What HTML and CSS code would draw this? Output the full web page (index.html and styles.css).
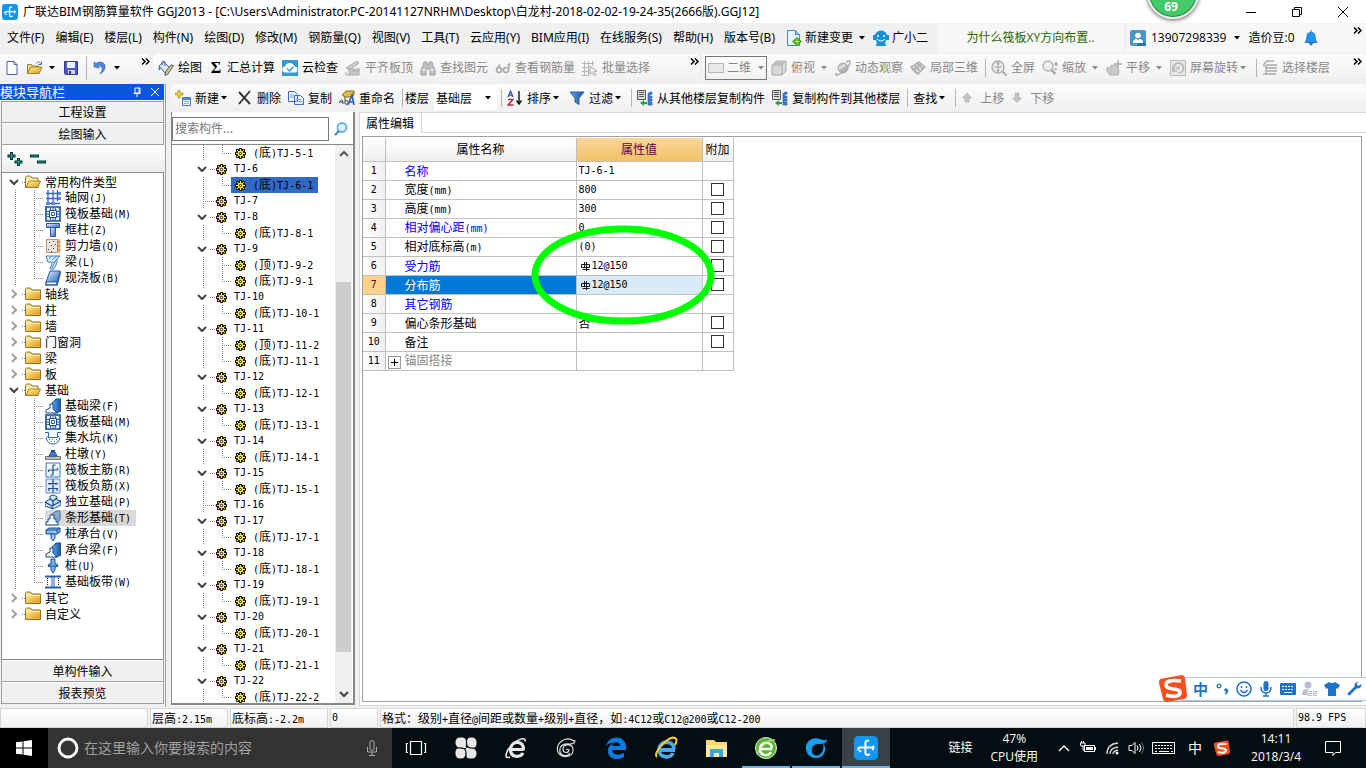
FILE: index.html
```html
<!DOCTYPE html>
<html lang="zh-CN">
<head>
<meta charset="utf-8">
<title>广联达BIM钢筋算量软件 GGJ2013</title>
<link rel="stylesheet" href="styles.css">
</head>
<body>
<svg class="defs" aria-hidden="true">
<defs>
<linearGradient id="gold" x1="0" y1="0" x2="1" y2="1"><stop offset="0" stop-color="#fff3a8"/><stop offset="1" stop-color="#e09a10"/></linearGradient>
<linearGradient id="blue" x1="0" y1="0" x2="1" y2="1"><stop offset="0" stop-color="#e4f0ff"/><stop offset="1" stop-color="#2f66c4"/></linearGradient>
<linearGradient id="steel" x1="0" y1="0" x2="1" y2="0"><stop offset="0" stop-color="#5aa7ea"/><stop offset="1" stop-color="#1c4f9c"/></linearGradient>
<symbol id="logo" viewBox="0 0 16 16"><rect width="16" height="16" rx="3" fill="#1296ee"/><path d="M10 3.400c-1.600-1-2.400 0-2.400 1.200v6.800c0 1.400 2.200 1.800 2.800.4M3 9.600c-.6-1.200 0-2 1.200-2h8.400M12.600 6.400c.8.8.6 2.400-.6 2.600M3.400 10.400l1.400-.6" fill="none" stroke="#fff" stroke-width="1.300"/></symbol>
<symbol id="arrow" viewBox="0 0 6 4"><path d="M0 0h6L3 3.500z" fill="currentColor"/></symbol>
<symbol id="more" viewBox="0 0 9 7"><path d="M1 .5l3 3-3 3M5 .5l3 3-3 3" fill="none" stroke="#000" stroke-width="1.500"/></symbol>
<symbol id="doc" viewBox="0 0 16 16"><path d="M3 1.500h7l3 3v10H3z" fill="#fdfeff" stroke="#49669a"/><path d="M10 1.500v3h3" fill="#bcd0ec" stroke="#49669a"/></symbol>
<symbol id="open" viewBox="0 0 16 16"><path d="M.5 13.500v-9h4l1 1.500h6v2" fill="url(#gold)" stroke="#9b7b31"/><path d="M.5 13.500l3-6.500h11.500l-3 6.500z" fill="url(#gold)" stroke="#a5812c"/><path d="M9 3.500c2-2.500 4-1.500 4.500.5M14.500 1.500v3h-3" fill="none" stroke="#4f6e9b"/></symbol>
<symbol id="save" viewBox="0 0 16 16"><path d="M1.500 1.500h13v13h-12l-1-1z" fill="#4e55bd" stroke="#343a91"/><path d="M4 2h8v6H4z" fill="#e8efff"/><path d="M5 10h7v4H5z" fill="#cdd5e8"/><path d="M6 11h2v3H6z" fill="#30367f"/></symbol>
<symbol id="undo" viewBox="0 0 16 16"><path d="M2 7V2l2 1.500C9 0 14 3 13 8c-.5 3-3 5-5 6 2-3 3-5 1.500-7C8.500 5.500 7 5.500 6 6l1.500 2z" fill="#4d86dc" stroke="#2d62b8" stroke-width=".6"/></symbol>
<symbol id="draw" viewBox="0 0 16 16"><path d="M1 6l5-4 6 6-5 5z" fill="#dce8f8" stroke="#41659b"/><path d="M4 5V2q1-2 3 0v4" fill="none" stroke="#41659b"/><path d="M1 6q-1 3 0 5 2-2 1-4z" fill="#3d79d0"/><path d="M15.500 5.500L10 14l-3 1.500.5-3.500L13 5z" fill="#e9c352" stroke="#3862a3"/></symbol>
<symbol id="cloud" viewBox="0 0 16 16"><path d="M0 0h16v16H0z" fill="#3598d7"/><path d="M3.500 12.500a3 3 0 0 1-.5-6 5 5 0 0 1 9.500 0 3 3 0 0 1 0 6z" fill="#fff"/><path d="M5 8.500l2.500 2.500 4-4" fill="none" stroke="#3598d7" stroke-width="1.500"/></symbol>
<symbol id="align" viewBox="0 0 16 16"><path d="M1 8l11-7 2 2-8 6z" fill="#ccc" stroke="#aaa"/><path d="M4 9h4v2h6V8M4 9v6h10v-4" fill="#c6c6c6" stroke="#aaa"/><path d="M1 12v3h3" fill="none" stroke="#aaa"/></symbol>
<symbol id="bino" viewBox="0 0 16 16"><path d="M4 2h3v3h2V2h3l1 4 2 4v5h-5V9H6v6H1v-5l2-4z" fill="#c1c1c1" stroke="#9d9d9d"/><path d="M2 10h4M10 10h4" stroke="#fff"/></symbol>
<symbol id="glasses" viewBox="0 0 16 16"><circle cx="4" cy="10" r="2.500" fill="none" stroke="#aaa" stroke-width="1.600"/><circle cx="11" cy="10" r="2.500" fill="none" stroke="#aaa" stroke-width="1.600"/><path d="M6.500 9.500h2M2 9l3-4.500M13.500 10l1-6-2 1" fill="none" stroke="#aaa" stroke-width="1.400"/></symbol>
<symbol id="batch" viewBox="0 0 16 16"><path d="M0 3.500h12M0 7.500h7M0 11.500h7M0 15.500h7M2.500 1v14M6.500 1v14M10.500 1v5" stroke="#b4b4b4" fill="none"/><path d="M8 6l7 5-3 .5 2 3-2 1-2-3-2 2z" fill="#eee" stroke="#aaa"/></symbol>
<symbol id="cube" viewBox="0 0 16 16"><path d="M1 5l4-4h10v10l-4 4H1z" fill="#d8d8d8" stroke="#aaa"/><path d="M1 5h10v10M11 5l4-4" fill="none" stroke="#aaa"/><path d="M2 5l3-3h8l-3 3z" fill="#bebebe"/></symbol>
<symbol id="orbit" viewBox="0 0 16 16"><circle cx="8" cy="8" r="5" fill="#bbb" stroke="#aaa"/><path d="M2 13Q0 15 1.500 15C5 15 15 7 15 2q0-2-4 0" fill="none" stroke="#aaa" stroke-width="1.500"/><path d="M4 8l6-3" stroke="#e7e7e7" stroke-width="2"/></symbol>
<symbol id="local" viewBox="0 0 16 16"><path d="M1 7l8-5 6 5-7 7z" fill="#ddd" stroke="#aaa" stroke-width="1.300"/><path d="M4 5l6 6M7 3l6 6M4 10l7-6M1 7l4 5 3 2" fill="none" stroke="#aaa" stroke-width="1.300"/></symbol>
<symbol id="full" viewBox="0 0 16 16"><circle cx="7" cy="7" r="6" fill="#eee" stroke="#aaa" stroke-width="1.400"/><path d="M7 3v8M3 7h8M5.500 4L7 2.500 8.500 4M5.500 10L7 11.500 8.500 10" fill="none" stroke="#aaa" stroke-width="1.200"/><path d="M11.500 11.500l4 4" stroke="#aaa" stroke-width="2"/></symbol>
<symbol id="zoomi" viewBox="0 0 16 16"><circle cx="6" cy="6" r="5" fill="#eee" stroke="#b4b4b4" stroke-width="1.400"/><path d="M9.500 10l4 4" stroke="#aaa" stroke-width="2.500"/><path d="M12 4h4M14 2v4M12 9h3" stroke="#aaa" stroke-width="1.500"/></symbol>
<symbol id="pan" viewBox="0 0 16 16"><path d="M4 15c-4-4-4-7-2-8l2 2 1-4 6 1 2 4-1 5z" fill="#c9c9c9" stroke="#b0b0b0"/><path d="M12 0v8M8 4h8" stroke="#aaa" stroke-width="1.400"/></symbol>
<symbol id="rotate" viewBox="0 0 16 16"><path d="M.5.500h15v15H.500z" fill="#e6e6e6" stroke="#bbb"/><path d="M4 10a5 5 0 1 1 5 3M3 6v5h4" fill="none" stroke="#b4b4b4" stroke-width="1.600"/><circle cx="8" cy="8" r="2" fill="#ccc"/></symbol>
<symbol id="floor" viewBox="0 0 16 16"><path d="M2 4l3-3h7M2 4v3M4 5h11M4 8h11M4 11h11M1 14h13M4 5v9" fill="none" stroke="#aaa" stroke-width="1.400"/></symbol>
<symbol id="rect" viewBox="0 0 16 16"><path d="M.5 3.500h15v9H.500z" fill="#e8e8e8" stroke="#b5b5b5"/></symbol>
<symbol id="newitem" viewBox="0 0 16 16"><path d="M3 0h2v3h3v2H5v3H3V5H0V3h3z" fill="#f4d745" stroke="#a28420" stroke-width=".7"/><path d="M7.500 7.500h8v8h-8z" fill="#edf4ff" stroke="#4d79bd"/><path d="M8 8h7v2H8z" fill="#4d86dc"/><path d="M9 11.500h5M9 13.500h5" stroke="#8dabdb"/></symbol>
<symbol id="del" viewBox="0 0 16 16"><path d="M2 2l11 12M13 1L2 14" stroke="#333" stroke-width="1.900"/></symbol>
<symbol id="copy" viewBox="0 0 16 16"><path d="M.5 1.500h6l3 3v7h-9zM6.500 5.500h6l3 3v6h-9z" fill="#eef4ff" stroke="#3f6dbb"/><path d="M2 5h4M2 7h4M8 9.500h5M8 11.500h6" stroke="#7ba0dd"/></symbol>
<symbol id="rename" viewBox="0 0 16 16"><path d="M3 5l4-4h8v4l-4 2H6z" fill="#e2ba43" stroke="#886d22"/><path d="M0 13q3-6 4-1v2M1 12h3M6 7v7q4 1 3-3-1-1-3 0" fill="none" stroke="#444"/><path d="M9 15l4-10 2 10M10 12h5" fill="none" stroke="#285fb9" stroke-width="1.600"/></symbol>
<symbol id="sort" viewBox="0 0 16 16"><path d="M1 7l2.500-6L6 7M2 5h3" fill="none" stroke="#315eb0" stroke-width="1.400"/><path d="M1 9.500h5L1 15h5.500" fill="none" stroke="#a23047" stroke-width="1.400"/><path d="M12 1v12M9.500 10.500L12 14l2.500-3.500" fill="none" stroke="#111" stroke-width="1.400"/></symbol>
<symbol id="filter" viewBox="0 0 16 16"><path d="M1 2h14L10 8v6.500L6 12V8z" fill="url(#steel)" stroke="#2c5daf"/></symbol>
<symbol id="fcopy" viewBox="0 0 16 16"><path d="M.5.500h8v9h-8z" fill="#ddd" stroke="#555"/><path d="M2 2.500h5M2 4.500h5M2 6.500h5" stroke="#555"/><path d="M3 13l4-3v2h3v2H7v2z" fill="#22a340"/><path d="M11 4q0-2 4-2v2l-3 1v1h3v2h-3v1h3v2h-3v1h3v3h-4z" fill="#3f7ed0" stroke="#2462b6" stroke-width=".7"/></symbol>
<symbol id="up" viewBox="0 0 12 12"><path d="M6 1l4.500 5H8v4H4V6H1.500z" fill="#c4c4c4" stroke="#aaa" stroke-width=".6"/></symbol>
<symbol id="down" viewBox="0 0 12 12"><path d="M6 10.500L1.500 6H4V1h4v5h2.500z" fill="#c4c4c4" stroke="#aaa" stroke-width=".6"/></symbol>
<symbol id="newdoc" viewBox="0 0 16 16"><path d="M1.500.500h8l4 4v11h-12z" fill="#e9f6ff" stroke="#4b88ad"/><path d="M9.500.500v4h4" fill="#8fc6e4" stroke="#4b88ad"/><path d="M11 7l5 4.500-5 4.500-5-4.500z" fill="#43a716"/><path d="M11 9v5M8.500 11.500h5" stroke="#c8ef69"/></symbol>
<symbol id="robot" viewBox="0 0 16 16"><circle cx="8" cy="7" r="6.500" fill="#168fd9"/><path d="M0 5h3v5H0zM13 5h3v5h-3zM4 12h8l1 4H3z" fill="#168fd9"/><path d="M5 5v2M11 5v2" stroke="#fff" stroke-width="1.500"/><path d="M4 9q4 4 8 0" stroke="#fff" fill="none"/></symbol>
<symbol id="user" viewBox="0 0 16 16"><rect width="16" height="16" rx="2" fill="#4699c9"/><path d="M9 7l7 7v2H7z" fill="#28749f"/><circle cx="8" cy="5.500" r="2.800" fill="#fff"/><path d="M3 13v-2l3-2.500 2 1.500 2-1.500 3 2.500v2z" fill="#fff"/></symbol>
<symbol id="bell" viewBox="0 0 14 16"><path d="M7 0v2M1 12.500q2-2 2-7C3.500 1 10.500 1 11 5.500q0 5 2 7zM5 13h4l-2 2.500z" fill="#2292f3" stroke="#126dc1" stroke-width=".8"/></symbol>
<symbol id="folder" viewBox="0 0 16 14"><path d="M.5 12.500v-10l1-1.500h4l1.500 2h8.500v9.500z" fill="url(#gold)" stroke="#967126"/><path d="M1 4.500h14" stroke="#fff3b7"/></symbol>
<symbol id="fopen" viewBox="0 0 16 14"><path d="M.5 12.500v-10l1-1.500h4l1.500 2h6v9.500z" fill="#fff0a6" stroke="#967126"/><path d="M1 12.500L4 6h11.500l-3 6.500z" fill="url(#gold)" stroke="#a97c22"/></symbol>
<symbol id="cdown" viewBox="0 0 10 10"><path d="M1 3l4 4 4-4" fill="none" stroke="#444" stroke-width="2"/></symbol>
<symbol id="cright" viewBox="0 0 10 10"><path d="M3 1l4 4-4 4" fill="none" stroke="#a0a0a0" stroke-width="2"/></symbol>
<symbol id="cup" viewBox="0 0 10 10"><path d="M1 7l4-4 4 4" fill="none" stroke="#555" stroke-width="2"/></symbol>
<symbol id="gear" viewBox="0 0 11 11"><path d="M4 0h3v11H4zM0 4h11v3H0zM1 1h3v3H1zM7 1h3v3H7zM1 7h3v3H1zM7 7h3v3H7z" fill="#222"/><path d="M5 1h1v2H5zM5 8h1v2H5zM1 5h2v1H1zM8 5h2v1H8zM2 2h1v1H2zM8 2h1v1H8zM2 8h1v1H2zM8 8h1v1H8zM3 3h5v5H3z" fill="#fff200"/><path d="M3 3h1v1H3zM7 3h1v1H7zM3 7h1v1H3zM7 7h1v1H7z" fill="#fff200"/><path d="M4.500 4.500h2v2h-2z" fill="#fff" stroke="#333" stroke-width=".8"/></symbol>
<symbol id="grid" viewBox="0 0 16 16"><path d="M3 0v15M8 0v15M12.500 0v11M1 3.500h14M1 8.500h14M1 13.500h14" stroke="#3465c5" stroke-width="1.300"/><path d="M1 12h4v3H1zM6 12h4v3H6zM13 2h3v3h-3zM13 7h3v3h-3z" fill="#5f86d8"/></symbol>
<symbol id="raft" viewBox="0 0 16 16"><path d="M1 1h14v14H1z" fill="#e6f2ff" stroke="#174e93" stroke-width="1.600"/><path d="M4.500 4.500h7v7h-7z" fill="#fff" stroke="#174e93"/><path d="M6.500 6.500h3v3h-3zM2 5.500h2M2 8h2M2 10.500h2M12 5.500h2M12 8h2M12 10.500h2M5.500 2v2M8 2v2M10.500 2v2M5.500 12v2M8 12v2M10.500 12v2" fill="none" stroke="#174e93" stroke-width=".9"/></symbol>
<symbol id="column" viewBox="0 0 16 16"><path d="M1.500 1.500h13v4h-13z" fill="url(#blue)" stroke="#2857a5"/><path d="M5.500 5.500h5v9h-5z" fill="url(#blue)" stroke="#2857a5"/></symbol>
<symbol id="wall" viewBox="0 0 16 16"><path d="M1.500 1.500h11v13h-11z" fill="#e8e5df" stroke="#bf9168"/><path d="M4 4h1v1H4zM8 3h1v1H8zM6 7h1v1H6zM10 6h1v1h-1zM3 11h1v1H3zM8 10h1v1H8zM6 13h1v1H6z" fill="#333"/><path d="M14 1v14M12 4h4M12 8h4M12 12h4" stroke="#d86b16"/></symbol>
<symbol id="beam" viewBox="0 0 16 16"><path d="M1 2h14l-3 3v4l-3 6H5l2-5V8H3z" fill="#d9edff" stroke="#397fc0"/><path d="M4 5l3-3M7 6l5-4M8 9l5-5M7 14l4-8" stroke="#3b92d1"/></symbol>
<symbol id="slab" viewBox="0 0 16 16"><path d="M5 1h10l-3 11H1z" fill="url(#blue)" stroke="#295aae"/><path d="M1 12v3h11l3-11V1M12 12v3" fill="none" stroke="#295aae" stroke-width="1.500"/></symbol>
<symbol id="fbeam" viewBox="0 0 16 16"><path d="M7 5l4-4h5v12l-4 2H8z" fill="url(#steel)" stroke="#174e93"/><path d="M5 6h3v5l4 4H1v-3l4-2z" fill="#eef6ff" stroke="#174e93"/></symbol>
<symbol id="pit" viewBox="0 0 16 16"><path d="M0 2.500h3.500v5h9v-5H16M1 7q1 7 7 7t7-7" fill="none" stroke="#2364b4"/><path d="M2 6h1v1H2zM4 9h1v1H4zM7 9h1v1H7zM6 11h1v1H6zM9 11h1v1H9zM11 9h1v1h-1zM13 6h1v1h-1z" fill="#2a73cf"/></symbol>
<symbol id="pier" viewBox="0 0 16 16"><path d="M.5 10.500h15v3H.500z" fill="#bbb" stroke="#777"/><path d="M4 10l2-4h4l2 4z" fill="#438cd0" stroke="#205396"/><path d="M6 4h4v2H6z" fill="#174e93"/></symbol>
<symbol id="main" viewBox="0 0 16 16"><path d="M1 1h14v14H1z" fill="#eef5ff" stroke="#4673b8"/><path d="M8 3v10M3.500 8h9M3.500 8v2M12.500 6v2M8 3h2.500M5.500 13H8" fill="none" stroke="#174e93" stroke-width="1.200"/></symbol>
<symbol id="nega" viewBox="0 0 16 16"><path d="M1 1h14v14H1z" fill="#dfe9f8" stroke="#6d8ec7"/><path d="M8 1v14M3 5.500h10M3 10.500h10M5 5v2M11 5v2M4 10v3M12 10v3" stroke="#174e93" stroke-width="1.200"/></symbol>
<symbol id="indep" viewBox="0 0 16 16"><path d="M0 8l5-3V2l4-1 3 2v3l4 1v4l-8 4-8-3z" fill="#cfe4fa" stroke="#174e93"/><path d="M0 8l7 4 9-5M7 12v3M5 5l3 2v4M8 7l4-3" fill="none" stroke="#174e93" stroke-width="1.300"/></symbol>
<symbol id="strip" viewBox="0 0 16 16"><path d="M6 5l5-4h4v9l-3 3z" fill="#86a8cd" stroke="#4d6f98"/><path d="M5 5h4v4h2v3h2v3H1v-3h2V9h2z" fill="#f3f8ff" stroke="#174e93"/></symbol>
<symbol id="cap" viewBox="0 0 16 16"><path d="M1 4l3-2h11v4l-3 2H1z" fill="#7ab4e8" stroke="#174e93"/><path d="M1 4h11v4M12 4l3-2M6 8h4v4l-2 3-2-3z" fill="#9fcbf0" stroke="#174e93"/></symbol>
<symbol id="pile" viewBox="0 0 16 16"><path d="M6 1h4v5h2l1 2-3 1v3l-2 3-2-3V9L3 8l1-2h2z" fill="#7cb3ea" stroke="#174e93"/><path d="M3 8h10" stroke="#174e93"/></symbol>
<symbol id="band" viewBox="0 0 16 16"><path d="M0 2.500h16M0 13.500h16" stroke="#245fb3" stroke-width="2"/><path d="M2.500 4v8M13.500 4v8" stroke="#222" stroke-dasharray="1 1"/><path d="M9 3v10M7 3v10" stroke="#245fb3"/></symbol>
<symbol id="sogou" viewBox="0 0 28 28"><path d="M1 5L23 1q2 0 3 3l2 17q0 3-3 4L8 28q-3 0-4-3L0 9q0-3 1-4z" fill="#f3501e"/><path d="M22 7Q7 5 7 11c0 6 15 2 14 8-1 4-8 4-14 2" fill="none" stroke="#fff" stroke-width="3.600"/></symbol>
</defs>
</svg>

<div class="app">
<header class="titlebar">
  <svg class="i16"><use href="#logo"/></svg>
  <h1>广联达BIM钢筋算量软件 GGJ2013 - [C:\Users\Administrator.PC-20141127NRHM\Desktop\白龙村-2018-02-02-19-24-35(2666版).GGJ12]</h1>
  <div class="winbtns">
    <button aria-label="最小化"><svg viewBox="0 0 12 12"><path d="M1 6.500h10" stroke="#000"/></svg></button>
    <button aria-label="还原"><svg viewBox="0 0 12 12"><path d="M1.500 3.500h7v7h-7zM3.500 3V1.500h7v7H9" fill="none" stroke="#000"/></svg></button>
    <button aria-label="关闭"><svg viewBox="0 0 12 12"><path d="M1 1l10 10M11 1L1 11" stroke="#000"/></svg></button>
  </div>
  <div class="score">69</div>
</header>

<nav class="menubar">
  <div class="menus">
    <button>文件(F)</button><button>编辑(E)</button><button>楼层(L)</button><button>构件(N)</button><button>绘图(D)</button><button>修改(M)</button><button>钢筋量(Q)</button><button>视图(V)</button><button>工具(T)</button><button>云应用(Y)</button><button>BIM应用(I)</button><button>在线服务(S)</button><button>帮助(H)</button><button>版本号(B)</button>
    <button><svg class="i16"><use href="#newdoc"/></svg>新建变更<svg class="arr"><use href="#arrow"/></svg></button>
    <button><svg class="i16"><use href="#robot"/></svg>广小二</button>
  </div>
  <a class="tip" href="#">为什么筏板XY方向布置..</a>
  <div class="account">
    <button><svg class="i16"><use href="#user"/></svg>13907298339<svg class="arr"><use href="#arrow"/></svg></button>
    <button>造价豆:0</button>
    <button aria-label="通知"><svg class="i16"><use href="#bell"/></svg></button>
    <svg class="more"><use href="#more"/></svg>
  </div>
</nav>

<div class="toolrow">
  <div class="bar file">
    <button aria-label="新建"><svg class="i16"><use href="#doc"/></svg></button>
    <button aria-label="打开"><svg class="i16"><use href="#open"/></svg><svg class="arr"><use href="#arrow"/></svg></button>
    <button aria-label="保存"><svg class="i16"><use href="#save"/></svg></button>
    <span class="sep"></span>
    <button aria-label="撤销"><svg class="i16"><use href="#undo"/></svg><svg class="arr"><use href="#arrow"/></svg></button>
    <svg class="more"><use href="#more"/></svg>
  </div>
  <div class="bar edit">
    <button><svg class="i16"><use href="#draw"/></svg>绘图</button>
    <button><span class="sigma">Σ</span>汇总计算</button>
    <button><svg class="i16"><use href="#cloud"/></svg>云检查</button>
    <button disabled><svg class="i16"><use href="#align"/></svg>平齐板顶</button>
    <button disabled><svg class="i16"><use href="#bino"/></svg>查找图元</button>
    <button disabled><svg class="i16"><use href="#glasses"/></svg>查看钢筋量</button>
    <button disabled><svg class="i16"><use href="#batch"/></svg>批量选择</button>
    <svg class="more"><use href="#more"/></svg>
  </div>
  <div class="bar view">
    <label class="combo dim"><svg class="i16"><use href="#rect"/></svg><select disabled aria-label="视图模式"><option>二维</option></select><svg class="arr"><use href="#arrow"/></svg></label>
    <button disabled><svg class="i16"><use href="#cube"/></svg>俯视<svg class="arr"><use href="#arrow"/></svg></button>
    <button disabled><svg class="i16"><use href="#orbit"/></svg>动态观察</button>
    <button disabled><svg class="i16"><use href="#local"/></svg>局部三维</button>
    <span class="sep"></span>
    <button disabled><svg class="i16"><use href="#full"/></svg>全屏</button>
    <button disabled><svg class="i16"><use href="#zoomi"/></svg>缩放<svg class="arr"><use href="#arrow"/></svg></button>
    <button disabled><svg class="i16"><use href="#pan"/></svg>平移<svg class="arr"><use href="#arrow"/></svg></button>
    <button disabled class="tight"><svg class="i16"><use href="#rotate"/></svg>屏幕旋转<svg class="arr"><use href="#arrow"/></svg></button>
    <span class="sep"></span>
    <button disabled><svg class="i16"><use href="#floor"/></svg>选择楼层</button>
    <svg class="more"><use href="#more"/></svg>
  </div>
</div>

<div class="body">
<aside class="nav">
  <div class="navhead"><h2>模块导航栏</h2>
    <button aria-label="固定"><svg viewBox="0 0 10 10"><path d="M3 1h5v5H3zM1.500 6.500h7M5 7v3M7 1v5" fill="none" stroke="#fff"/></svg></button>
    <button aria-label="关闭"><svg viewBox="0 0 10 10"><path d="M1 1l8 8M9 1L1 9" stroke="#fff"/></svg></button>
  </div>
  <button class="section">工程设置</button>
  <button class="section">绘图输入</button>
  <div class="navtools">
    <button aria-label="全部展开"><svg viewBox="0 0 16 16"><path d="M4.500 1v8M.500 5h8M11.500 7v8M7.500 11h8" stroke="#033" stroke-width="3"/><path d="M4.500 2v6M1.500 5h6M11.500 8v6M8.500 11h6" stroke="#18a09a" stroke-width="1"/></svg></button>
    <button aria-label="全部折叠"><svg viewBox="0 0 16 16"><path d="M0 5h9M7 11h9" stroke="#033" stroke-width="3"/><path d="M1 5h7M8 11h7" stroke="#18a09a"/></svg></button>
  </div>
  <ul class="tree modules">
    <li class="dir"><svg class="chev"><use href="#cdown"/></svg><svg class="fold"><use href="#fopen"/></svg>常用构件类型</li>
    <li class="leaf"><svg class="i16"><use href="#grid"/></svg><span>轴网<span class="m">(J)</span></span></li>
    <li class="leaf"><svg class="i16"><use href="#raft"/></svg><span>筏板基础<span class="m">(M)</span></span></li>
    <li class="leaf"><svg class="i16"><use href="#column"/></svg><span>框柱<span class="m">(Z)</span></span></li>
    <li class="leaf"><svg class="i16"><use href="#wall"/></svg><span>剪力墙<span class="m">(Q)</span></span></li>
    <li class="leaf"><svg class="i16"><use href="#beam"/></svg><span>梁<span class="m">(L)</span></span></li>
    <li class="leaf last"><svg class="i16"><use href="#slab"/></svg><span>现浇板<span class="m">(B)</span></span></li>
    <li class="dir"><svg class="chev"><use href="#cright"/></svg><svg class="fold"><use href="#folder"/></svg>轴线</li>
    <li class="dir"><svg class="chev"><use href="#cright"/></svg><svg class="fold"><use href="#folder"/></svg>柱</li>
    <li class="dir"><svg class="chev"><use href="#cright"/></svg><svg class="fold"><use href="#folder"/></svg>墙</li>
    <li class="dir"><svg class="chev"><use href="#cright"/></svg><svg class="fold"><use href="#folder"/></svg>门窗洞</li>
    <li class="dir"><svg class="chev"><use href="#cright"/></svg><svg class="fold"><use href="#folder"/></svg>梁</li>
    <li class="dir"><svg class="chev"><use href="#cright"/></svg><svg class="fold"><use href="#folder"/></svg>板</li>
    <li class="dir"><svg class="chev"><use href="#cdown"/></svg><svg class="fold"><use href="#fopen"/></svg>基础</li>
    <li class="leaf"><svg class="i16"><use href="#fbeam"/></svg><span>基础梁<span class="m">(F)</span></span></li>
    <li class="leaf"><svg class="i16"><use href="#raft"/></svg><span>筏板基础<span class="m">(M)</span></span></li>
    <li class="leaf"><svg class="i16"><use href="#pit"/></svg><span>集水坑<span class="m">(K)</span></span></li>
    <li class="leaf"><svg class="i16"><use href="#pier"/></svg><span>柱墩<span class="m">(Y)</span></span></li>
    <li class="leaf"><svg class="i16"><use href="#main"/></svg><span>筏板主筋<span class="m">(R)</span></span></li>
    <li class="leaf"><svg class="i16"><use href="#nega"/></svg><span>筏板负筋<span class="m">(X)</span></span></li>
    <li class="leaf"><svg class="i16"><use href="#indep"/></svg><span>独立基础<span class="m">(P)</span></span></li>
    <li class="leaf"><span class="node current"><svg class="i16"><use href="#strip"/></svg><span>条形基础<span class="m">(T)</span></span></span></li>
    <li class="leaf"><svg class="i16"><use href="#cap"/></svg><span>桩承台<span class="m">(V)</span></span></li>
    <li class="leaf"><svg class="i16"><use href="#fbeam"/></svg><span>承台梁<span class="m">(F)</span></span></li>
    <li class="leaf"><svg class="i16"><use href="#pile"/></svg><span>桩<span class="m">(U)</span></span></li>
    <li class="leaf last"><svg class="i16"><use href="#band"/></svg><span>基础板带<span class="m">(W)</span></span></li>
    <li class="dir"><svg class="chev"><use href="#cright"/></svg><svg class="fold"><use href="#folder"/></svg>其它</li>
    <li class="dir"><svg class="chev"><use href="#cright"/></svg><svg class="fold"><use href="#folder"/></svg>自定义</li>
  </ul>
  <button class="section">单构件输入</button>
  <button class="section">报表预览</button>
</aside>

<main class="work">
  <div class="bar parts">
    <button class="tight"><svg class="i16"><use href="#newitem"/></svg>新建<svg class="arr"><use href="#arrow"/></svg></button>
    <button><svg class="i16"><use href="#del"/></svg>删除</button>
    <button><svg class="i16"><use href="#copy"/></svg>复制</button>
    <button><svg class="i16"><use href="#rename"/></svg>重命名</button>
    <span class="sep"></span>
    <label class="floorlabel" for="floorsel">楼层</label>
    <span class="combo"><select id="floorsel"><option>基础层</option></select><svg class="arr"><use href="#arrow"/></svg></span>
    <span class="sep"></span>
    <button class="tight"><svg class="i16"><use href="#sort"/></svg>排序<svg class="arr"><use href="#arrow"/></svg></button>
    <button class="tight"><svg class="i16"><use href="#filter"/></svg>过滤<svg class="arr"><use href="#arrow"/></svg></button>
    <span class="sep"></span>
    <button><svg class="i16"><use href="#fcopy"/></svg>从其他楼层复制构件</button>
    <button><svg class="i16"><use href="#fcopy"/></svg>复制构件到其他楼层</button>
    <span class="sep"></span>
    <button class="tight">查找<svg class="arr"><use href="#arrow"/></svg></button>
    <span class="sep"></span>
    <button disabled class="move"><svg class="i12"><use href="#up"/></svg>上移</button>
    <button disabled class="move"><svg class="i12"><use href="#down"/></svg>下移</button>
  </div>
  <div class="panes">
    <section class="list">
      <div class="search"><input type="text" placeholder="搜索构件..." aria-label="搜索构件"><button aria-label="搜索"><svg class="i16" viewBox="0 0 16 16"><circle cx="9" cy="6.500" r="4.500" fill="#e3f5ff" stroke="#5cb3ea" stroke-width="1.800"/><path d="M6 10l-4 4" stroke="#3f87bb" stroke-width="2.200"/></svg></button></div>
      <div class="scroll">
      <ul class="tree items">
        <li class="leaf last"><svg class="gear"><use href="#gear"/></svg><span class="t">(<span class="c">底</span>)TJ-5-1</span></li>
        <li class="dir"><svg class="chev"><use href="#cdown"/></svg><svg class="gear"><use href="#gear"/></svg>TJ-6</li>
        <li class="leaf last"><span class="node picked"><svg class="gear"><use href="#gear"/></svg><span class="t">(<span class="c">底</span>)TJ-6-1</span></span></li>
        <li class="dir solo"><svg class="gear"><use href="#gear"/></svg>TJ-7</li>
        <li class="dir"><svg class="chev"><use href="#cdown"/></svg><svg class="gear"><use href="#gear"/></svg>TJ-8</li>
        <li class="leaf last"><svg class="gear"><use href="#gear"/></svg><span class="t">(<span class="c">底</span>)TJ-8-1</span></li>
        <li class="dir"><svg class="chev"><use href="#cdown"/></svg><svg class="gear"><use href="#gear"/></svg>TJ-9</li>
        <li class="leaf"><svg class="gear"><use href="#gear"/></svg><span class="t">(<span class="c">顶</span>)TJ-9-2</span></li>
        <li class="leaf last"><svg class="gear"><use href="#gear"/></svg><span class="t">(<span class="c">底</span>)TJ-9-1</span></li>
        <li class="dir"><svg class="chev"><use href="#cdown"/></svg><svg class="gear"><use href="#gear"/></svg>TJ-10</li>
        <li class="leaf last"><svg class="gear"><use href="#gear"/></svg><span class="t">(<span class="c">底</span>)TJ-10-1</span></li>
        <li class="dir"><svg class="chev"><use href="#cdown"/></svg><svg class="gear"><use href="#gear"/></svg>TJ-11</li>
        <li class="leaf"><svg class="gear"><use href="#gear"/></svg><span class="t">(<span class="c">顶</span>)TJ-11-2</span></li>
        <li class="leaf last"><svg class="gear"><use href="#gear"/></svg><span class="t">(<span class="c">底</span>)TJ-11-1</span></li>
        <li class="dir"><svg class="chev"><use href="#cdown"/></svg><svg class="gear"><use href="#gear"/></svg>TJ-12</li>
        <li class="leaf last"><svg class="gear"><use href="#gear"/></svg><span class="t">(<span class="c">底</span>)TJ-12-1</span></li>
        <li class="dir"><svg class="chev"><use href="#cdown"/></svg><svg class="gear"><use href="#gear"/></svg>TJ-13</li>
        <li class="leaf last"><svg class="gear"><use href="#gear"/></svg><span class="t">(<span class="c">底</span>)TJ-13-1</span></li>
        <li class="dir"><svg class="chev"><use href="#cdown"/></svg><svg class="gear"><use href="#gear"/></svg>TJ-14</li>
        <li class="leaf last"><svg class="gear"><use href="#gear"/></svg><span class="t">(<span class="c">底</span>)TJ-14-1</span></li>
        <li class="dir"><svg class="chev"><use href="#cdown"/></svg><svg class="gear"><use href="#gear"/></svg>TJ-15</li>
        <li class="leaf last"><svg class="gear"><use href="#gear"/></svg><span class="t">(<span class="c">底</span>)TJ-15-1</span></li>
        <li class="dir solo"><svg class="gear"><use href="#gear"/></svg>TJ-16</li>
        <li class="dir"><svg class="chev"><use href="#cdown"/></svg><svg class="gear"><use href="#gear"/></svg>TJ-17</li>
        <li class="leaf last"><svg class="gear"><use href="#gear"/></svg><span class="t">(<span class="c">底</span>)TJ-17-1</span></li>
        <li class="dir"><svg class="chev"><use href="#cdown"/></svg><svg class="gear"><use href="#gear"/></svg>TJ-18</li>
        <li class="leaf last"><svg class="gear"><use href="#gear"/></svg><span class="t">(<span class="c">底</span>)TJ-18-1</span></li>
        <li class="dir"><svg class="chev"><use href="#cdown"/></svg><svg class="gear"><use href="#gear"/></svg>TJ-19</li>
        <li class="leaf last"><svg class="gear"><use href="#gear"/></svg><span class="t">(<span class="c">底</span>)TJ-19-1</span></li>
        <li class="dir"><svg class="chev"><use href="#cdown"/></svg><svg class="gear"><use href="#gear"/></svg>TJ-20</li>
        <li class="leaf last"><svg class="gear"><use href="#gear"/></svg><span class="t">(<span class="c">底</span>)TJ-20-1</span></li>
        <li class="dir"><svg class="chev"><use href="#cdown"/></svg><svg class="gear"><use href="#gear"/></svg>TJ-21</li>
        <li class="leaf last"><svg class="gear"><use href="#gear"/></svg><span class="t">(<span class="c">底</span>)TJ-21-1</span></li>
        <li class="dir"><svg class="chev"><use href="#cdown"/></svg><svg class="gear"><use href="#gear"/></svg>TJ-22</li>
        <li class="leaf last"><svg class="gear"><use href="#gear"/></svg><span class="t">(<span class="c">底</span>)TJ-22-2</span></li>
      </ul>
      <div class="vbar"><svg class="chev"><use href="#cup"/></svg><div class="track"><div class="thumb"></div></div><svg class="chev"><use href="#cdown"/></svg></div>
      </div>
    </section>
    <section class="props">
      <div class="tabs"><button class="tab">属性编辑</button></div>
      <div class="sheet">
        <div class="tablebox">
        <table>
          <colgroup><col class="cn"><col class="ca"><col class="cv"><col class="cx"></colgroup>
          <thead><tr><th></th><th>属性名称</th><th class="hot">属性值</th><th>附加</th></tr></thead>
          <tbody>
            <tr><th>1</th><td class="key">名称</td><td class="m">TJ-6-1</td><td></td></tr>
            <tr><th>2</th><td>宽度<span class="m">(mm)</span></td><td class="m">800</td><td><input type="checkbox" aria-label="附加 宽度"></td></tr>
            <tr><th>3</th><td>高度<span class="m">(mm)</span></td><td class="m">300</td><td><input type="checkbox" aria-label="附加 高度"></td></tr>
            <tr><th>4</th><td class="key">相对偏心距<span class="m">(mm)</span></td><td class="m">0</td><td><input type="checkbox" aria-label="附加 相对偏心距"></td></tr>
            <tr><th>5</th><td>相对底标高<span class="m">(m)</span></td><td class="m">(0)</td><td><input type="checkbox" aria-label="附加 相对底标高"></td></tr>
            <tr><th>6</th><td class="key">受力筋</td><td class="m"><svg class="bar-sym" viewBox="0 0 10 10"><path d="M.5 3.500h8v3h-8zM3.500 1v6M5.500 1v9M1.500 8.500h7" fill="none" stroke="#000" stroke-width=".9"/></svg>12@150</td><td><input type="checkbox" aria-label="附加 受力筋"></td></tr>
            <tr class="sel"><th>7</th><td>分布筋</td><td class="m"><svg class="bar-sym" viewBox="0 0 10 10"><path d="M.5 3.500h8v3h-8zM3.500 1v6M5.500 1v9M1.500 8.500h7" fill="none" stroke="#000" stroke-width=".9"/></svg>12@150</td><td><input type="checkbox" aria-label="附加 分布筋"></td></tr>
            <tr><th>8</th><td class="key">其它钢筋</td><td></td><td></td></tr>
            <tr><th>9</th><td>偏心条形基础</td><td>否</td><td><input type="checkbox" aria-label="附加 偏心条形基础"></td></tr>
            <tr><th>10</th><td>备注</td><td></td><td><input type="checkbox" aria-label="附加 备注"></td></tr>
            <tr><th>11</th><td class="group"><button aria-label="展开"><svg viewBox="0 0 11 11"><path d="M2 5.500h7M5.500 2v7" stroke="#000"/></svg></button>锚固搭接</td><td></td><td></td></tr>
          </tbody>
        </table>
        <svg class="mark" viewBox="0 0 184 100"><ellipse cx="92" cy="50" rx="88" ry="46" fill="none" stroke="#0f0" stroke-width="7"/></svg>
        </div>
      </div>
    </section>
  </div>
</main>
</div>

<footer class="status">
  <span></span><span class="s2">层高<span class="m">:2.15m</span></span><span class="s3">底标高<span class="m">:-2.2m</span></span><span class="s4 m">0</span>
  <span class="s5">格式：级别<span class="m">+</span>直径<span class="m">@</span>间距或数量<span class="m">+</span>级别<span class="m">+</span>直径，如<span class="m">:4C12</span>或<span class="m">C12@200</span>或<span class="m">C12-200</span></span>
  <span class="s6 m">98.9 FPS</span>
</footer>

<footer class="taskbar">
  <button class="start" aria-label="开始"><svg viewBox="0 0 16 16"><path d="M0 2.300l6.500-.9v6.100H0zM7.500 1.200L16 0v7.500H7.500zM0 8.500h6.500v6.100L0 13.700zM7.500 8.500H16V16l-8.500-1.200z" fill="#fff"/></svg></button>
  <label class="cortana"><svg class="ring" viewBox="0 0 22 22"><circle cx="11" cy="11" r="9" fill="none" stroke="#fff" stroke-width="2.800"/></svg><input type="text" placeholder="在这里输入你要搜索的内容" aria-label="搜索"><svg class="mic" viewBox="0 0 12 16"><path d="M4 1.500q2-2 4 0v8q-2 2-4 0zM1.500 7v5h9V7M6 12v3.500M3 15.500h6" fill="none" stroke="#aaa"/></svg></label>
  <button class="app-i" aria-label="任务视图"><svg viewBox="0 0 24 24"><path d="M6.500 5.500h11v13h-11zM4 7.500H2.500v9H4M20 7.500h1.500v9H20" fill="none" stroke="#fff" stroke-width="1.200"/></svg></button>
  <button class="app-i" aria-label="应用"><svg viewBox="0 0 24 24"><g fill="#e8e8e8"><rect x="1.500" y="1.500" width="11" height="10" rx="4.500"/><rect x="12.500" y="1.500" width="10" height="11" rx="4.500"/><rect x="11.500" y="12.500" width="11" height="10" rx="4.500"/><rect x="1.500" y="11.500" width="10" height="11" rx="4.500"/><path d="M7 7h10v10H7z"/></g><path d="M12.500 2v5q0 5 5 5H22M2 12h5q5 0 5 5v5M12 12.500H7M12.500 12V7" fill="none" stroke="#071014" stroke-width="1.200"/></svg></button>
  <button class="app-i" aria-label="浏览器"><svg viewBox="0 0 24 24"><path d="M7 13.500h12.500M19.500 14c1-10-12-10-13-1-.5 9 10 9 12.500 4" fill="none" stroke="#e8e8e8" stroke-width="3.200"/><path d="M6 21C-1 24 2 14 9 8S22 1 21 5.500" fill="none" stroke="#e8e8e8" stroke-width="1.600"/></svg></button>
  <button class="app-i" aria-label="广联达"><svg viewBox="0 0 24 24"><path d="M20 5C11-1 1 8 4 16c3 7 16 6 15-3-1-6-10-5-10 0 0 4 5 5 6 1l-3-1M21 4c0 4-3 4-6 4-7-1-10 3-9 8 1 4 8 5 10 1" fill="none" stroke="#ddd" stroke-width="1.200"/></svg></button>
  <button class="app-i" aria-label="Edge"><svg viewBox="0 0 24 24"><path d="M2 11C4-2 22-1 22 11v3H8c1 6 8 5 12 3v4C11 26 3 21 4 14c0-3 3-6 6-7-6-1-8 4-8 4zM8 10h8c0-5-7-5-8 0z" fill="#0a7be0"/></svg></button>
  <button class="app-i" aria-label="Internet Explorer"><svg viewBox="0 0 24 24"><path d="M6 14h15M20 13c0-9-14-9-15 0-1 9 12 10 14 4" fill="none" stroke="#49a9ef" stroke-width="3.800"/><path d="M3 21C-2 17 15-1 21 2q3 1 0 7" fill="none" stroke="#f5c928" stroke-width="2"/></svg></button>
  <button class="app-i" aria-label="文件资源管理器"><svg viewBox="0 0 24 24"><path d="M2 4h8l2 2h11v15H2z" fill="#f8d775"/><path d="M2 9h21v12H2z" fill="#ffe9a2"/><path d="M6 21v-8h13v8h-4v-4h-5v4z" fill="#35a7dc"/></svg></button>
  <button class="app-i running" aria-label="360浏览器"><svg viewBox="0 0 24 24"><circle cx="12" cy="12" r="10.500" fill="#55b92b" stroke="#dff5d2"/><path d="M6 13h12M18 12c0-7-11-7-12 0-1 8 9 9 11 4" fill="none" stroke="#fff" stroke-width="2.500"/><path d="M3 19C5 12 15 2 21 4" fill="none" stroke="#d6f5a8"/></svg></button>
  <button class="app-i running" aria-label="广联达服务"><svg viewBox="0 0 24 24"><path d="M23 3c-2 2-4 1-7 0C8 0 1 6 2 13c1 9 12 12 17 6 3-4 3-9 0-11 1 4 0 9-4 11-5 2-8-2-7-6 1-5 5-5 8-5 4 0 7-1 7-5z" fill="#159fee"/></svg></button>
  <button class="app-i running active" aria-label="广联达算量"><svg><use href="#logo"/></svg></button>
  <div class="tray">
    <span class="link">链接</span>
    <span class="two cpu">47%<br>CPU使用</span>
    <svg class="t1" viewBox="0 0 12 12"><path d="M1 9l5-5 5 5" fill="none" stroke="#fff" stroke-width="1.300"/></svg>
    <svg class="t2" viewBox="0 0 16 16"><path d="M4.500 5.500h10v6h-10zM15.500 7v3M0 3h5v3H1zM1.500 1v2M3.500 1v2M3 6v4h2" fill="none" stroke="#fff"/><path d="M6 7h7v3H6z" fill="#fff"/></svg>
    <svg class="t2" viewBox="0 0 16 16"><path d="M3 14Q3 4 14 3M6 14q0-6 8-7M9 14q0-3 5-4" fill="none" stroke="#ddd" stroke-width="1.300"/><circle cx="13" cy="13" r="1.500" fill="#fff"/></svg>
    <svg class="t2" viewBox="0 0 16 16"><path d="M1 5.500h3l3-3v11l-3-3H1zM9 5.500q2 2.500 0 5M11.500 4q3 4 0 8" fill="none" stroke="#fff"/><path d="M13.500 2.500q4 5.500 0 11" fill="none" stroke="#777"/></svg>
    <svg class="t3" viewBox="0 0 24 14"><path d="M.5 1.500h22v11H.500z" fill="none" stroke="#fff"/><path d="M3 4.500h18M3 7.500h18" stroke="#fff" stroke-dasharray="2 1"/><path d="M3 10.500h2M7 10.500h10M19 10.500h2" stroke="#fff"/></svg>
    <span class="ime">中</span>
    <svg class="t2"><use href="#sogou"/></svg>
    <time class="two clock">14:11<br>2018/3/4</time>
    <svg class="note" viewBox="0 0 16 16"><path d="M.5 1.500h15v11h-5l-2.500 3v-3h-7.500z" fill="none" stroke="#fff"/></svg>
  </div>
</footer>

<div class="sogoubar">
  <svg class="slogo"><use href="#sogou"/></svg>
  <b>中</b>
  <svg viewBox="0 0 16 16"><circle cx="5" cy="5" r="1.800" fill="none" stroke="#1e73c8" stroke-width="1.300"/><circle cx="12" cy="9" r="1.800" fill="#1e73c8"/><path d="M13.500 9q0 3-2.500 4" fill="none" stroke="#1e73c8" stroke-width="1.400"/></svg>
  <svg viewBox="0 0 16 16"><circle cx="8" cy="8" r="7" fill="none" stroke="#1e73c8" stroke-width="1.500"/><path d="M5.500 5v2M10.500 5v2M4.500 9q3.500 5 7 0" fill="none" stroke="#1e73c8" stroke-width="1.400"/></svg>
  <svg viewBox="0 0 16 16"><rect x="5.500" y="0" width="5" height="10" rx="2.500" fill="#1e73c8"/><path d="M3 6q0 6 5 6t5-6M8 12v3M5 15h6" fill="none" stroke="#1e73c8" stroke-width="1.500"/></svg>
  <svg viewBox="0 0 16 16"><rect x="0" y="2" width="16" height="12" rx="1" fill="#1e73c8"/><path d="M2 5.500h12M2 8.500h12" stroke="#fff" stroke-dasharray="2 1"/><path d="M4 11.500h8" stroke="#fff"/></svg>
  <svg viewBox="0 0 16 16"><circle cx="6" cy="4" r="3.500" fill="#b5bed2"/><path d="M0 14q0-7 6-6l3 2v4z" fill="#b5bed2"/><path d="M5.500 8.500h10v7h-10z" fill="#fff"/><path d="M6 10.500h3.500v2h-3v2H10M11 10.500h3.500v2h-3v2H15" fill="none" stroke="#b5bed2" stroke-width="1.200"/></svg>
  <svg viewBox="0 0 16 16"><path d="M5 1q3 2 6 0l5 3-2 4-2-1v8H4V7L2 8 0 4z" fill="#1e73c8"/></svg>
  <svg viewBox="0 0 16 16"><path d="M1.500 12.500l7-7q-.5-4 4-5L10.500 3l2 2L15.500 3q0 5-5 4.500l-7 7q-2 0-2-2z" fill="#1e73c8"/></svg>
</div>
</div>
</body>
</html>
```
FILE: styles.css
```css
* { box-sizing: border-box; }
html, body { margin: 0; height: 100%; }
body {
  font: 12px/16px "Open Sans", "Noto Sans CJK SC", sans-serif;
  color: #000;
  background: #f0f0f0;
  overflow: hidden;
}
button, input, select { font: inherit; color: inherit; margin: 0; padding: 0; border: 0; background: none; }
button { display: flex; align-items: center; white-space: nowrap; }
select { appearance: none; }
svg { display: block; flex: none; }
ul { list-style: none; margin: 0; padding: 0; }
h1, h2 { font: inherit; margin: 0; }
.defs { position: absolute; width: 0; height: 0; }
.i16 { width: 16px; height: 16px; }
.i12 { width: 12px; height: 12px; }
.arr { width: 6px; height: 4px; }
.m { font-family: "DejaVu Sans Mono", monospace; font-size: 10px; }
.app { position: relative; display: flex; flex-direction: column; height: 100vh; }

.titlebar { position: relative; display: flex; flex: none; align-items: center; height: 23px; padding-left: 2px; gap: 5px; background: #fff; white-space: nowrap; }
.titlebar h1 { flex: 1; font-family: "Noto Sans", "Noto Sans CJK SC", sans-serif; }
.winbtns { display: flex; }
.winbtns button { width: 46px; height: 20px; justify-content: center; }
.winbtns svg { width: 12px; height: 12px; }
.score {
  position: absolute; top: 0; right: 171px; width: 48px; height: 16px; isolation: isolate;
  color: #fff; font-weight: bold; text-align: center; line-height: 14px;
}
.score::before {
  content: ""; position: absolute; z-index: -1; left: 0; bottom: -3px; width: 48px; height: 48px;
  border: 2px solid #eee; border-radius: 50%; background: #45c866;
  box-shadow: inset 0 0 0 1px #168548, 0 1px 4px #555;
}

.menubar { display: flex; flex: none; height: 30px; gap: 2px; }
.menus { display: flex; align-items: center; gap: 11px; padding-left: 7px; flex: 0 0 935px; font-family: "Noto Sans", "Noto Sans CJK SC", sans-serif; }
.menus button, .account button { gap: 3px; }
.menus .arr { margin-left: 3px; }
.menus button:last-child { margin-left: -3px; }
.account .arr { margin-left: 3px; }
.tip { flex: 0 0 187px; display: flex; align-items: center; justify-content: center; color: #2b6400; text-decoration: none; background: #f7f7f7; border-radius: 4px; }
.account { flex: 1; display: flex; align-items: center; gap: 8px; padding: 0 4px; background: #f7f7f7; border-radius: 4px; }
.account button:first-child { gap: 5px; }
.more { width: 9px; height: 7px; margin-left: auto; align-self: flex-start; margin-top: 4px; }

.toolrow { display: flex; flex: none; gap: 3px; padding-top: 1px; }
.bar { display: flex; align-items: center; gap: 7px; background: linear-gradient(#fcfcfc, #efefef); border-radius: 4px; white-space: nowrap; }
.toolrow .bar { height: 30px; padding-bottom: 2px; }
.bar button { gap: 4px; }
.bar .arr { margin: 0 1px 0 2px; }
.bar .tight .arr { margin: 0 3px 0 -2px; }
.bar button:disabled, .bar .dim { color: #888; }
.sep { width: 1px; height: 18px; background: #b5b5b5; }
.sep + button, .sep + .combo { margin-left: -2px; }
.bar.file { flex: 0 0 150px; padding-left: 4px; }
.bar.file .sep { height: 24px; }
.bar.edit { flex: 0 0 546px; padding-left: 5px; }
.bar.view { flex: 1; padding: 0 4px 2px 3px; }
.sigma { font: bold 16px/16px "Liberation Serif", serif; width: 14px; text-align: center; }
.combo { display: flex; align-items: center; height: 24px; background: #fff; }
.combo select { width: 46px; }
.combo.dim { border: 1px solid #777; background: none; width: 62px; gap: 3px; padding-left: 2px; margin-right: -3px; }
.combo.dim select { width: 26px; opacity: 1; }
.combo.dim .arr { margin: 0 3px; }

.body { display: flex; flex: 1; min-height: 0; gap: 5px; }
.nav { flex: 0 0 166px; display: flex; flex-direction: column; padding: 0 1px 3px; border-right: 1px solid #a0a0a0; font-family: "Noto Sans CJK SC", sans-serif; }
.navhead { display: flex; align-items: center; height: 16px; margin: 0 0 1px -1px; background: #0a56e0; color: #fff; }
.navhead h2 { flex: 1; font-size: 13px; }
.navhead button { width: 18px; justify-content: center; }
.navhead svg { width: 10px; height: 10px; }
.section { flex: none; height: 22px; justify-content: center; border: 1px solid #a0a0a0; border-top-color: #fff; background: #f0f0f0; }
.navhead + .section { border-top-color: #a0a0a0; }
.navtools { display: flex; align-items: center; gap: 7px; height: 27px; padding-left: 5px; border-left: 1px solid #a0a0a0; background: linear-gradient(#fff, #ececec); }
.navtools svg { width: 16px; height: 16px; }
.tree { background: #fff; overflow: hidden; }
.tree li { display: flex; align-items: center; height: 16px; line-height: 16px; white-space: nowrap; }
.chev { width: 10px; height: 10px; }
.modules { flex: 1; border: 1px solid #828790; padding-top: 1px; }
.fold { width: 16px; height: 14px; }

/* dotted connectors are painted as row backgrounds */
.tree li { --v: repeating-linear-gradient(#808080 0 1px, transparent 1px 2px); --h: repeating-linear-gradient(90deg, #808080 0 1px, transparent 1px 2px); background-repeat: no-repeat; }
.modules .dir { gap: 4px; padding-left: 7px; background-image: var(--h); background-size: 5px 1px; background-position: 20px 8px; }
.modules .dir .fold { margin-left: 2px; }
.modules .leaf { gap: 4px; padding-left: 43px; background-image: var(--v), var(--v), var(--h); background-size: 1px 16px, 1px 16px, 10px 1px; background-position: 13px 0, 32px 0, 32px 8px; }
.modules .last { background-size: 1px 16px, 1px 8px, 10px 1px; }
.node { display: flex; align-items: center; height: 16px; }
.node.current { gap: 4px; background: #d9d9d9; padding-right: 5px; }

.work { flex: 1; display: flex; flex-direction: column; min-width: 0; }
.parts { flex: none; height: 27px; padding-left: 4px; font-family: "Noto Sans CJK SC", sans-serif; }
.parts .floorlabel { margin-left: -5px; }
.parts .combo { margin: 0 -3px 0 -2px; padding: 0 2px; width: 63px; }
.parts .combo .arr { margin: 0 3px; }
.parts .move { gap: 7px; }
.panes { flex: 1; display: flex; min-height: 0; gap: 4px; padding-top: 1px; }
.list { flex: 0 0 184px; display: flex; flex-direction: column; background: #fff; border: 1px solid #828790; border-top: 0; border-width: 0 2px 2px 1px; margin-bottom: 2px; }
.search { display: flex; flex: none; padding: 5px 4px 3px 0; gap: 4px; border-bottom: 1px solid #828790; }
.search input { flex: 1; min-width: 0; height: 24px; padding: 0 0 3px 2px; border: 1px solid #777; font-family: "Noto Sans CJK SC", sans-serif; }
.search input::placeholder { color: #777; opacity: 1; }
.search button { width: 16px; justify-content: center; }
.scroll { flex: 1; display: flex; min-height: 0; }
.items { flex: 1; font-family: "DejaVu Sans Mono", "Noto Sans CJK SC", monospace; font-size: 10px; }
.items .c { font-size: 12px; }
.gear { width: 11px; height: 11px; }
.items .dir { gap: 7px; padding-left: 25px; background-image: var(--h); background-size: 5px 1px; background-position: 38px 8px; }
.items .dir .chev + .gear { margin-left: 2px; }
.items .solo { padding-left: 44px; background-image: var(--v), var(--h); background-size: 1px 16px, 13px 1px; background-position: 31px 0, 31px 8px; }
.items .leaf { gap: 7px; padding-left: 63px; background-image: var(--v), var(--v), var(--h); background-size: 1px 16px, 1px 16px, 10px 1px; background-position: 31px 0, 50px 0, 50px 8px; }
.items .last { background-size: 1px 16px, 1px 8px, 10px 1px; }
.node.picked { gap: 7px; margin-left: -4px; padding: 0 5px 0 4px; background: #316ac5; }
.vbar { flex: 0 0 17px; display: flex; flex-direction: column; align-items: center; gap: 4px; padding: 4px 0; margin-right: 1px; background: #f0f0f0; }
.track { flex: 1; align-self: stretch; padding: 119px 1px 33px; }
.thumb { height: 100%; background: #cdcdcd; }

.props { flex: 1; display: flex; flex-direction: column; min-width: 0; background: #fff; border: 1px solid #d9d9d9; border-right: 0; margin-bottom: 1px; padding: 0 4px 3px 3px; font-family: "Noto Sans CJK SC", sans-serif; }
.tabs { display: flex; flex: none; height: 20px; border-bottom: 1px solid #d9d9d9; margin: 0 -4px 3px -3px; }
.tab { height: 20px; padding: 0 7px 0 6px; background: #fff; border-right: 1px solid #d9d9d9; }
.sheet { flex: 1; border: 1px solid #a0a0a0; border-width: 1px 1px 1px 0; padding-top: 1px; box-shadow: -1px 0 #a0a0a0; }
.tablebox { position: relative; width: 370px; }
table { width: 370px; border-collapse: collapse; table-layout: fixed; }
.cn { width: 22px; } .ca { width: 191px; } .cv { width: 126px; } .cx { width: 31px; }
th, td { height: 19px; padding: 0; border: 1px solid #c0c0c0; font-weight: normal; line-height: 16px; white-space: nowrap; overflow: hidden; }
tr > :first-child { border-left: 0; }
thead th { height: 23px; border-top: 0; background: linear-gradient(#fff, #eee); }
thead .hot { background: linear-gradient(#f8d79a, #f2c067); color: #600040; }
tbody th { background: linear-gradient(90deg, #fff, #efefef); font: 10px/16px "DejaVu Sans Mono", monospace; }
td:nth-child(2) { padding-left: 19px; }
td:nth-child(3) { padding-left: 2px; }
.key { color: #00f; }
.sel th { background: #ffd089; color: #600040; }
.sel td:nth-child(2) { background: #0078d7; color: #fff; }
.sel td:nth-child(3) { background: #d9eaf9; }
td.group { padding-left: 2px; color: #888; }
.group button { display: inline-flex; width: 13px; height: 13px; border: 1px solid #999; margin-right: 4px; vertical-align: middle; background: #fff; }
.group svg { width: 11px; height: 11px; }
.bar-sym { display: inline-block; width: 10px; height: 10px; margin: 0 1px 0 2px; vertical-align: middle; }
td input { appearance: none; display: block; width: 13px; height: 13px; margin: 0 auto; border: 1px solid #333; background: #fff; }
.mark { position: absolute; left: 168px; top: 87px; width: 184px; height: 100px; }

.status { display: flex; flex: none; height: 21px; gap: 2px; padding-top: 1px; font-family: "Noto Sans CJK SC", sans-serif; }
.status > span { flex: 0 0 148px; height: 20px; padding-left: 1px; border: 1px solid #d7d7d7; background: linear-gradient(#fff, #f0f0f0); line-height: 18px; white-space: nowrap; }
.status .s2 { flex-basis: 78px; }
.status .s3 { flex-basis: 98px; }
.status .s4 { flex-basis: 48px; }
.status .s5 { flex: 1; }
.status .s6 { flex-basis: 70px; }

.taskbar { display: flex; flex: none; height: 40px; background: #040d11; color: #fff; }
.start { width: 48px; justify-content: center; background: #000; }
.start svg { width: 16px; height: 16px; }
.cortana { flex: 0 0 344px; display: flex; align-items: center; gap: 5px; padding: 0 14px 0 9px; background: #333; }
.ring { width: 22px; height: 22px; }
.cortana input { flex: 1; min-width: 0; font-size: 14px; line-height: 20px; }
.cortana input::placeholder { color: #a0a0a0; opacity: 1; }
.mic { width: 12px; height: 16px; }
.app-i { width: 48px; margin-right: 2px; justify-content: center; border-bottom: 2px solid transparent; border-top: 2px solid transparent; }
.app-i svg { width: 24px; height: 24px; }
.running { border-bottom-color: #76b0ee; }
.active { background: #394248; border-top-color: #394248; }
.tray { flex: 1; display: flex; align-items: center; padding-right: 25px; justify-content: flex-end; gap: 8px; line-height: 18px; }
.two { text-align: center; }
.cpu { margin: 0 12px 0 10px; }
.t1 { width: 12px; height: 12px; }
.t1 + .t2 { margin-left: 2px; }
.t2 { width: 16px; height: 16px; }
.t3 { width: 24px; height: 14px; }
.ime { font-size: 14px; margin: 0 4px; }
.clock { margin: 0 16px 0 13px; }
.note { width: 16px; height: 16px; }

.sogoubar { position: absolute; right: 0; bottom: 67px; display: flex; align-items: center; gap: 6px; height: 24px; width: 186px; padding: 0 4px 0 12px; background: #fff; border: 1px solid #b4cbe0; border-right: 0; color: #1e73c8; }
.sogoubar b { font-size: 15px; }
.sogoubar svg { width: 16px; height: 16px; }
.sogoubar .slogo { position: absolute; left: -22px; top: -4px; width: 28px; height: 28px; }
```
